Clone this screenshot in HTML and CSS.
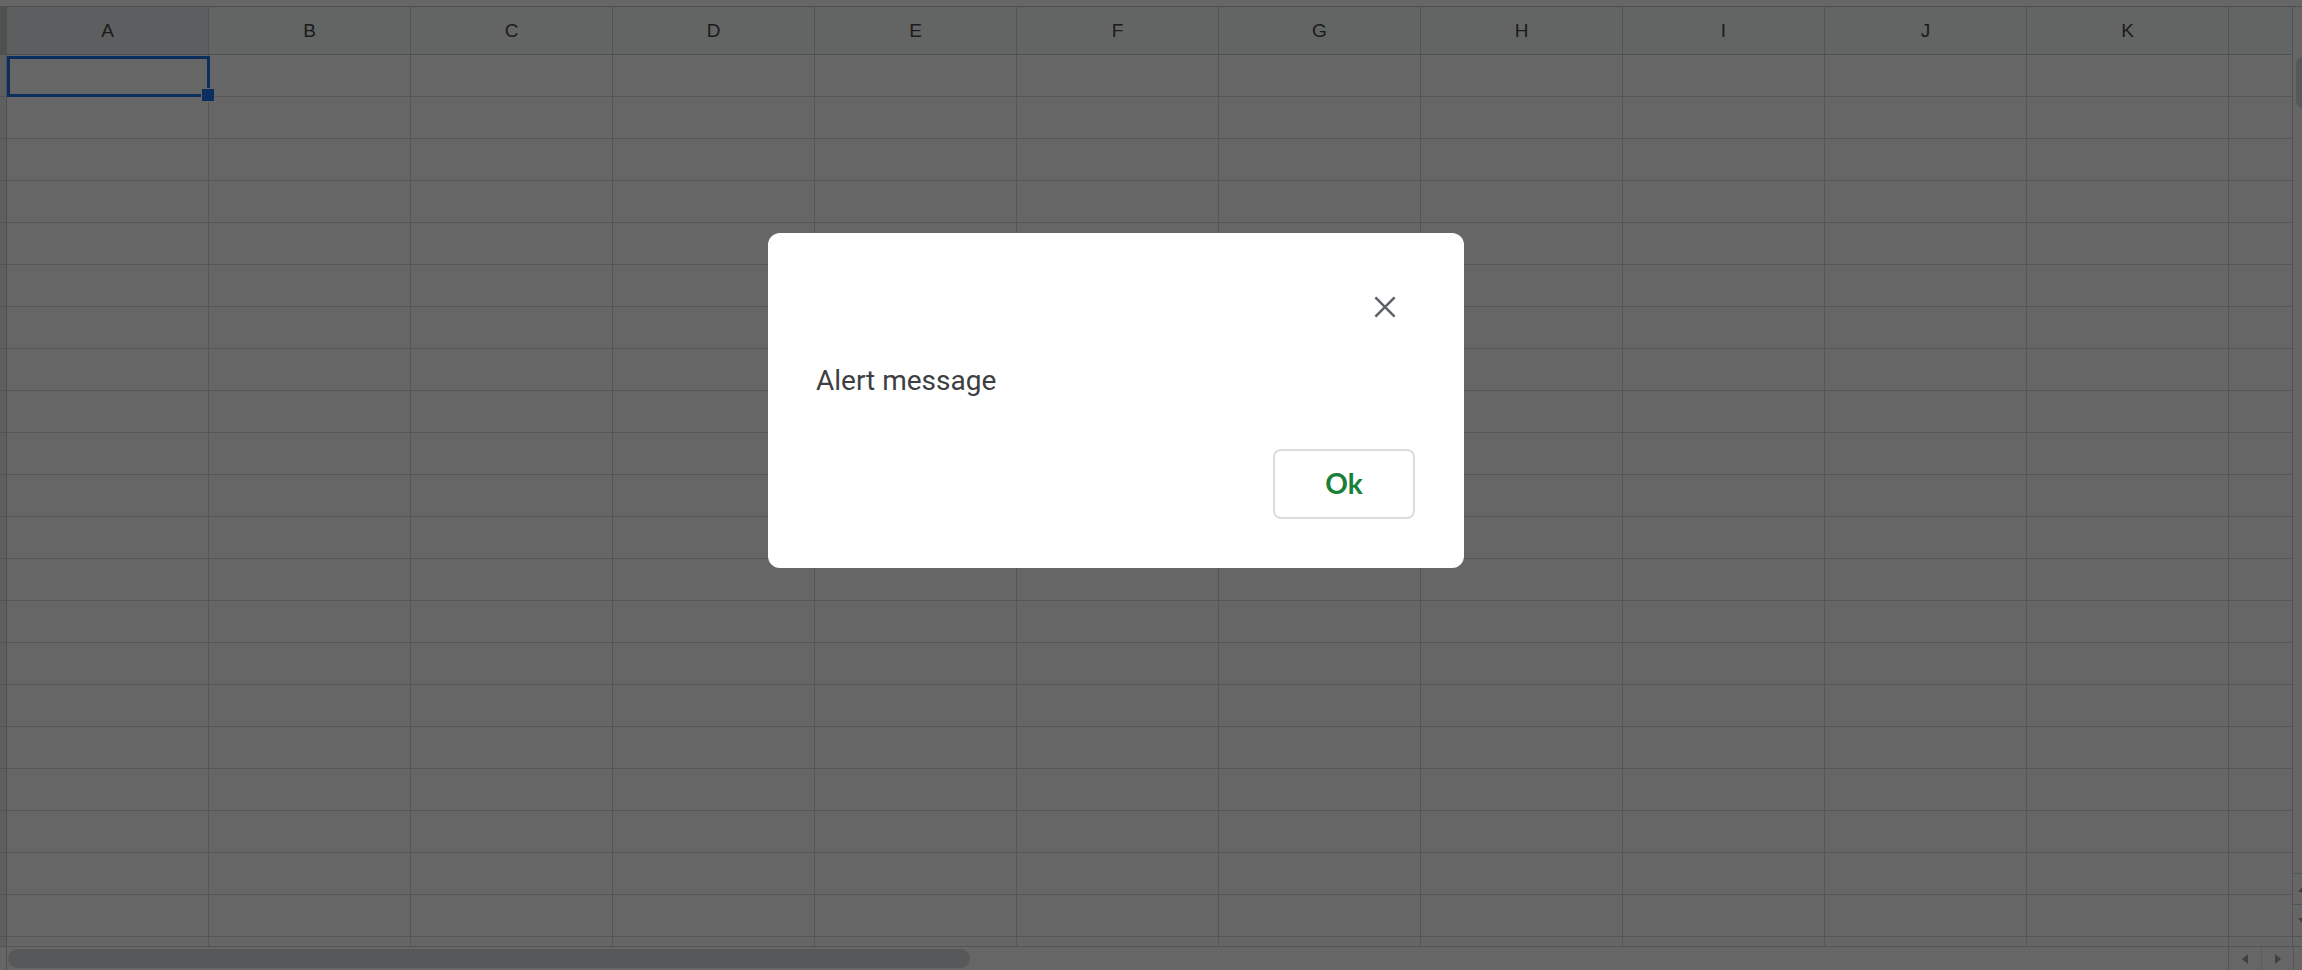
FILE: index.html
```html
<!DOCTYPE html>
<html lang="en">
<head>
    <meta charset="UTF-8">
    <title>Sheet - alert</title>
    <link rel="stylesheet" href="styles.css">
</head>
<body>
    <div class="sheet">
        <div class="topbar"></div>
        <div class="main">
            <div class="grid">
                <div class="col-heads">
                    <div class="corner"></div>
                    <div class="col-head selected">A</div>
                    <div class="col-head">B</div>
                    <div class="col-head">C</div>
                    <div class="col-head">D</div>
                    <div class="col-head">E</div>
                    <div class="col-head">F</div>
                    <div class="col-head">G</div>
                    <div class="col-head">H</div>
                    <div class="col-head">I</div>
                    <div class="col-head">J</div>
                    <div class="col-head">K</div>
                    <div class="col-head narrow"></div>
                </div>
                <div class="rows" id="rows"></div>
            </div>
            <div class="vscroll">
                <div class="vtrack"><div class="vthumb"></div></div>
                <div class="vbtn up"><span class="arrow arrow-up"></span></div>
                <div class="vbtn down"><span class="arrow arrow-down"></span></div>
                <div class="vtail"></div>
            </div>
        </div>
        <div class="hscroll">
            <div class="hscroll-head"></div>
            <div class="htrack"><div class="hthumb"></div></div>
            <div class="hbtn"><span class="arrow arrow-left"></span></div>
            <div class="hbtn"><span class="arrow arrow-right"></span></div>
            <div class="hscroll-corner"></div>
        </div>
    </div>

    <div class="scrim">
        <div class="dialog" role="alertdialog">
            <div class="dialog-head">
                <button class="close-btn" aria-label="Close">
                    <svg viewBox="0 0 24 24" width="36" height="36">
                        <path d="M5.6 5.6L18.4 18.4M18.4 5.6L5.6 18.4" stroke="#5f6368" stroke-width="1.7" fill="none"/>
                    </svg>
                </button>
            </div>
            <div class="dialog-msg">Alert message</div>
            <div class="dialog-actions">
                <button class="ok-btn">Ok</button>
            </div>
        </div>
    </div>

    <script>
        // build the empty grid rows
        const rows = document.getElementById('rows');
        for (let r = 0; r < 23; r++) {
            const row = document.createElement('div');
            row.className = 'row';
            const head = document.createElement('div');
            head.className = 'row-head';
            row.appendChild(head);
            for (let c = 0; c < 12; c++) {
                const cell = document.createElement('div');
                cell.className = c === 11 ? 'cell narrow' : 'cell';
                row.appendChild(cell);
            }
            rows.appendChild(row);
        }

        // active cell A1
        const first = rows.querySelector('.cell');
        first.classList.add('active');
        const sel = document.createElement('div');
        sel.className = 'selection';
        const handle = document.createElement('div');
        handle.className = 'fill-handle';
        first.appendChild(sel);
        first.appendChild(handle);
    </script>
</body>
</html>
```

FILE: styles.css
```css
html, body {
    margin: 0;
    padding: 0;
    width: 2302px;
    height: 970px;
    overflow: hidden;
    background-color: #fff;
    font-family: 'Liberation Sans', Arial, sans-serif;
}
.sheet {
    display: flex;
    flex-direction: column;
    height: 970px;
}
.topbar {
    height: 6px;
    border-bottom: 1px solid #c4c7c5;
    flex: none;
}
.main {
    display: flex;
    height: 939px;
    flex: none;
}
.grid {
    width: 2293px;
    overflow: hidden;
    flex: none;
}
.col-heads {
    display: flex;
    height: 48px;
    border-bottom: 1px solid #c4c7c5;
    box-sizing: border-box;
    background-color: #f8f9fa;
}
.corner {
    width: 7px;
    flex: none;
    box-sizing: border-box;
    border-right: 1px solid #c4c7c5;
    background-color: #c6c8c8;
}
.col-head {
    width: 202px;
    flex: none;
    box-sizing: border-box;
    border-right: 1px solid #cdcfcf;
    display: flex;
    align-items: center;
    justify-content: center;
    font-size: 19px;
    color: #444746;
}
.col-head.selected {
    background-color: #e8eaed;
}
.col-head.narrow {
    width: 64px;
}
.row {
    display: flex;
    height: 42px;
}
.row-head {
    width: 7px;
    flex: none;
    box-sizing: border-box;
    border-right: 1px solid #c4c7c5;
    border-bottom: 1px solid #cdcfcf;
    background-color: #eceeef;
}
.cell {
    width: 202px;
    flex: none;
    box-sizing: border-box;
    border-right: 1px solid #d6d6d6;
    border-bottom: 1px solid #d6d6d6;
}
.cell.narrow {
    width: 64px;
    border-right-color: #cdcfcf;
}
.cell.active {
    position: relative;
}
.selection {
    position: absolute;
    left: 0;
    top: 1px;
    width: 203px;
    height: 41px;
    box-sizing: border-box;
    border: 3px solid #1a73e8;
}
.fill-handle {
    position: absolute;
    left: 194px;
    top: 33px;
    width: 14px;
    height: 14px;
    box-sizing: border-box;
    border: 1px solid #fff;
    background-color: #1a73e8;
}
.vscroll {
    width: 9px;
    flex: none;
    display: flex;
    flex-direction: column;
    overflow: hidden;
}
.vtrack {
    flex: 1;
    padding-top: 50px;
}
.vthumb {
    margin-left: 3px;
    width: 14px;
    height: 51px;
    border-radius: 7px;
    background-color: #dadce0;
}
.vbtn {
    height: 31px;
    flex: none;
    box-sizing: border-box;
    display: flex;
    align-items: center;
    padding-left: 5px;
}
.vbtn.up {
    height: 32px;
    border-top: 1px solid #d2d4d4;
    border-bottom: 1px solid #c9d3e6;
}
.vtail {
    height: 10px;
    flex: none;
    box-sizing: border-box;
    border-top: 1px solid #d2d4d4;
}
.hscroll {
    display: flex;
    height: 24px;
    flex: none;
    box-sizing: border-box;
    border-top: 1px solid #cdcfcf;
}
.hscroll-head {
    width: 7px;
    flex: none;
    box-sizing: border-box;
    border-right: 1px solid #c4c7c5;
}
.htrack {
    width: 2221px;
    flex: none;
    padding: 2px 0 0 1px;
    box-sizing: border-box;
}
.hthumb {
    width: 962px;
    height: 19px;
    border-radius: 10px;
    background-color: #dadce0;
}
.hbtn {
    width: 33px;
    flex: none;
    box-sizing: border-box;
    border-left: 1px solid #d2d4d4;
    display: flex;
    align-items: center;
    justify-content: center;
}
.hbtn + .hbtn {
    width: 32px;
    border-left-color: #e6e6e6;
}
.hscroll-corner {
    width: 9px;
    flex: none;
    box-sizing: border-box;
    border-left: 1px solid #d2d4d4;
}
.arrow {
    width: 0;
    height: 0;
}
.arrow-left {
    border-top: 5px solid transparent;
    border-bottom: 5px solid transparent;
    border-right: 6px solid #a0a0a0;
}
.arrow-right {
    border-top: 5px solid transparent;
    border-bottom: 5px solid transparent;
    border-left: 6px solid #a0a0a0;
}
.arrow-up {
    border-left: 4px solid transparent;
    border-right: 4px solid transparent;
    border-bottom: 5px solid #a0a0a0;
}
.arrow-down {
    border-left: 4px solid transparent;
    border-right: 4px solid transparent;
    border-top: 5px solid #a0a0a0;
}

/* modal */
.scrim {
    position: fixed;
    inset: 0;
    background-color: rgba(0,0,0,0.6);
    display: flex;
    align-items: flex-start;
    padding: 233px 0 0 768px;
}
.dialog {
    width: 696px;
    box-sizing: border-box;
    padding: 0 49px 49px 48px;
    background-color: white;
    border-radius: 12px;
    font-family: Roboto, 'Liberation Sans', sans-serif;
}
.dialog-head {
    display: flex;
    justify-content: flex-end;
    padding-top: 56px;
}
.close-btn {
    width: 36px;
    height: 36px;
    margin-right: 12px;
    padding: 0;
    border: none;
    background: none;
    cursor: pointer;
}
.close-btn svg {
    display: block;
}
.dialog-msg {
    margin-top: 38px;
    font-size: 28px;
    line-height: 36px;
    color: #3c4043;
}
.dialog-actions {
    display: flex;
    justify-content: flex-end;
    margin-top: 50px;
}
.ok-btn {
    width: 142px;
    height: 70px;
    box-sizing: border-box;
    border: 2px solid #dadce0;
    border-radius: 8px;
    background-color: white;
    color: #188038;
    font-family: Lato, 'Open Sans', sans-serif;
    font-size: 28px;
    font-weight: 700;
    padding: 0 0 2px;
    cursor: pointer;
}
```
